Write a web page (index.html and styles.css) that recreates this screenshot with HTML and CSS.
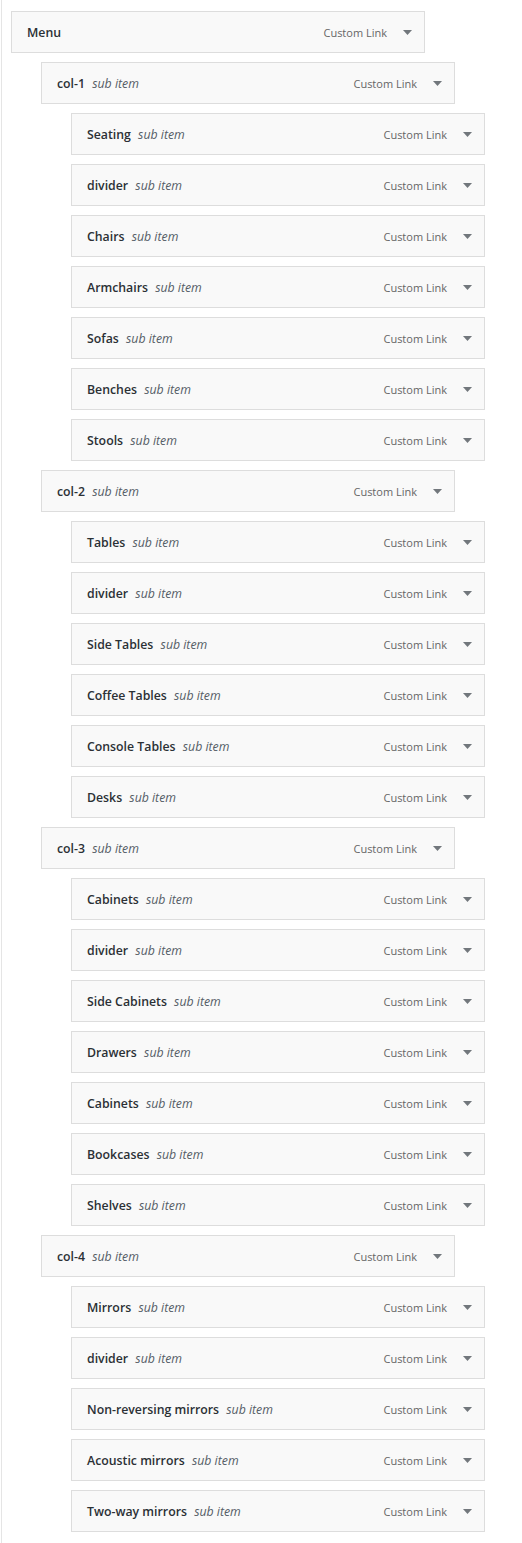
FILE: index.html
```html
<!DOCTYPE html>
<html lang="en">
<head>
<meta charset="utf-8">
<title>Menu structure</title>
<link rel="stylesheet" href="styles.css">
</head>
<body>
<div class="frame">
<ul class="menu">
  <li class="item depth-0"><div class="handle"><span class="title"><span class="label">Menu</span></span><span class="controls"><span class="type">Custom Link</span><svg class="arrow" width="9" height="5" viewBox="0 0 9 5"><path d="M0 0h9L4.5 5z"/></svg></span></div></li>
  <li class="item depth-1"><div class="handle"><span class="title"><span class="label">col-1</span> <span class="sub">sub item</span></span><span class="controls"><span class="type">Custom Link</span><svg class="arrow" width="9" height="5" viewBox="0 0 9 5"><path d="M0 0h9L4.5 5z"/></svg></span></div></li>
  <li class="item depth-2"><div class="handle"><span class="title"><span class="label">Seating</span> <span class="sub">sub item</span></span><span class="controls"><span class="type">Custom Link</span><svg class="arrow" width="9" height="5" viewBox="0 0 9 5"><path d="M0 0h9L4.5 5z"/></svg></span></div></li>
  <li class="item depth-2"><div class="handle"><span class="title"><span class="label">divider</span> <span class="sub">sub item</span></span><span class="controls"><span class="type">Custom Link</span><svg class="arrow" width="9" height="5" viewBox="0 0 9 5"><path d="M0 0h9L4.5 5z"/></svg></span></div></li>
  <li class="item depth-2"><div class="handle"><span class="title"><span class="label">Chairs</span> <span class="sub">sub item</span></span><span class="controls"><span class="type">Custom Link</span><svg class="arrow" width="9" height="5" viewBox="0 0 9 5"><path d="M0 0h9L4.5 5z"/></svg></span></div></li>
  <li class="item depth-2"><div class="handle"><span class="title"><span class="label">Armchairs</span> <span class="sub">sub item</span></span><span class="controls"><span class="type">Custom Link</span><svg class="arrow" width="9" height="5" viewBox="0 0 9 5"><path d="M0 0h9L4.5 5z"/></svg></span></div></li>
  <li class="item depth-2"><div class="handle"><span class="title"><span class="label">Sofas</span> <span class="sub">sub item</span></span><span class="controls"><span class="type">Custom Link</span><svg class="arrow" width="9" height="5" viewBox="0 0 9 5"><path d="M0 0h9L4.5 5z"/></svg></span></div></li>
  <li class="item depth-2"><div class="handle"><span class="title"><span class="label">Benches</span> <span class="sub">sub item</span></span><span class="controls"><span class="type">Custom Link</span><svg class="arrow" width="9" height="5" viewBox="0 0 9 5"><path d="M0 0h9L4.5 5z"/></svg></span></div></li>
  <li class="item depth-2"><div class="handle"><span class="title"><span class="label">Stools</span> <span class="sub">sub item</span></span><span class="controls"><span class="type">Custom Link</span><svg class="arrow" width="9" height="5" viewBox="0 0 9 5"><path d="M0 0h9L4.5 5z"/></svg></span></div></li>
  <li class="item depth-1"><div class="handle"><span class="title"><span class="label">col-2</span> <span class="sub">sub item</span></span><span class="controls"><span class="type">Custom Link</span><svg class="arrow" width="9" height="5" viewBox="0 0 9 5"><path d="M0 0h9L4.5 5z"/></svg></span></div></li>
  <li class="item depth-2"><div class="handle"><span class="title"><span class="label">Tables</span> <span class="sub">sub item</span></span><span class="controls"><span class="type">Custom Link</span><svg class="arrow" width="9" height="5" viewBox="0 0 9 5"><path d="M0 0h9L4.5 5z"/></svg></span></div></li>
  <li class="item depth-2"><div class="handle"><span class="title"><span class="label">divider</span> <span class="sub">sub item</span></span><span class="controls"><span class="type">Custom Link</span><svg class="arrow" width="9" height="5" viewBox="0 0 9 5"><path d="M0 0h9L4.5 5z"/></svg></span></div></li>
  <li class="item depth-2"><div class="handle"><span class="title"><span class="label">Side Tables</span> <span class="sub">sub item</span></span><span class="controls"><span class="type">Custom Link</span><svg class="arrow" width="9" height="5" viewBox="0 0 9 5"><path d="M0 0h9L4.5 5z"/></svg></span></div></li>
  <li class="item depth-2"><div class="handle"><span class="title"><span class="label">Coffee Tables</span> <span class="sub">sub item</span></span><span class="controls"><span class="type">Custom Link</span><svg class="arrow" width="9" height="5" viewBox="0 0 9 5"><path d="M0 0h9L4.5 5z"/></svg></span></div></li>
  <li class="item depth-2"><div class="handle"><span class="title"><span class="label">Console Tables</span> <span class="sub">sub item</span></span><span class="controls"><span class="type">Custom Link</span><svg class="arrow" width="9" height="5" viewBox="0 0 9 5"><path d="M0 0h9L4.5 5z"/></svg></span></div></li>
  <li class="item depth-2"><div class="handle"><span class="title"><span class="label">Desks</span> <span class="sub">sub item</span></span><span class="controls"><span class="type">Custom Link</span><svg class="arrow" width="9" height="5" viewBox="0 0 9 5"><path d="M0 0h9L4.5 5z"/></svg></span></div></li>
  <li class="item depth-1"><div class="handle"><span class="title"><span class="label">col-3</span> <span class="sub">sub item</span></span><span class="controls"><span class="type">Custom Link</span><svg class="arrow" width="9" height="5" viewBox="0 0 9 5"><path d="M0 0h9L4.5 5z"/></svg></span></div></li>
  <li class="item depth-2"><div class="handle"><span class="title"><span class="label">Cabinets</span> <span class="sub">sub item</span></span><span class="controls"><span class="type">Custom Link</span><svg class="arrow" width="9" height="5" viewBox="0 0 9 5"><path d="M0 0h9L4.5 5z"/></svg></span></div></li>
  <li class="item depth-2"><div class="handle"><span class="title"><span class="label">divider</span> <span class="sub">sub item</span></span><span class="controls"><span class="type">Custom Link</span><svg class="arrow" width="9" height="5" viewBox="0 0 9 5"><path d="M0 0h9L4.5 5z"/></svg></span></div></li>
  <li class="item depth-2"><div class="handle"><span class="title"><span class="label">Side Cabinets</span> <span class="sub">sub item</span></span><span class="controls"><span class="type">Custom Link</span><svg class="arrow" width="9" height="5" viewBox="0 0 9 5"><path d="M0 0h9L4.5 5z"/></svg></span></div></li>
  <li class="item depth-2"><div class="handle"><span class="title"><span class="label">Drawers</span> <span class="sub">sub item</span></span><span class="controls"><span class="type">Custom Link</span><svg class="arrow" width="9" height="5" viewBox="0 0 9 5"><path d="M0 0h9L4.5 5z"/></svg></span></div></li>
  <li class="item depth-2"><div class="handle"><span class="title"><span class="label">Cabinets</span> <span class="sub">sub item</span></span><span class="controls"><span class="type">Custom Link</span><svg class="arrow" width="9" height="5" viewBox="0 0 9 5"><path d="M0 0h9L4.5 5z"/></svg></span></div></li>
  <li class="item depth-2"><div class="handle"><span class="title"><span class="label">Bookcases</span> <span class="sub">sub item</span></span><span class="controls"><span class="type">Custom Link</span><svg class="arrow" width="9" height="5" viewBox="0 0 9 5"><path d="M0 0h9L4.5 5z"/></svg></span></div></li>
  <li class="item depth-2"><div class="handle"><span class="title"><span class="label">Shelves</span> <span class="sub">sub item</span></span><span class="controls"><span class="type">Custom Link</span><svg class="arrow" width="9" height="5" viewBox="0 0 9 5"><path d="M0 0h9L4.5 5z"/></svg></span></div></li>
  <li class="item depth-1"><div class="handle"><span class="title"><span class="label">col-4</span> <span class="sub">sub item</span></span><span class="controls"><span class="type">Custom Link</span><svg class="arrow" width="9" height="5" viewBox="0 0 9 5"><path d="M0 0h9L4.5 5z"/></svg></span></div></li>
  <li class="item depth-2"><div class="handle"><span class="title"><span class="label">Mirrors</span> <span class="sub">sub item</span></span><span class="controls"><span class="type">Custom Link</span><svg class="arrow" width="9" height="5" viewBox="0 0 9 5"><path d="M0 0h9L4.5 5z"/></svg></span></div></li>
  <li class="item depth-2"><div class="handle"><span class="title"><span class="label">divider</span> <span class="sub">sub item</span></span><span class="controls"><span class="type">Custom Link</span><svg class="arrow" width="9" height="5" viewBox="0 0 9 5"><path d="M0 0h9L4.5 5z"/></svg></span></div></li>
  <li class="item depth-2"><div class="handle"><span class="title"><span class="label">Non-reversing mirrors</span> <span class="sub">sub item</span></span><span class="controls"><span class="type">Custom Link</span><svg class="arrow" width="9" height="5" viewBox="0 0 9 5"><path d="M0 0h9L4.5 5z"/></svg></span></div></li>
  <li class="item depth-2"><div class="handle"><span class="title"><span class="label">Acoustic mirrors</span> <span class="sub">sub item</span></span><span class="controls"><span class="type">Custom Link</span><svg class="arrow" width="9" height="5" viewBox="0 0 9 5"><path d="M0 0h9L4.5 5z"/></svg></span></div></li>
  <li class="item depth-2"><div class="handle"><span class="title"><span class="label">Two-way mirrors</span> <span class="sub">sub item</span></span><span class="controls"><span class="type">Custom Link</span><svg class="arrow" width="9" height="5" viewBox="0 0 9 5"><path d="M0 0h9L4.5 5z"/></svg></span></div></li>
</ul>
</div>
</body>
</html>
```

FILE: styles.css
```css
html, body {
  margin: 0;
  padding: 0;
  background: #ffffff;
}

body {
  font-family: "Open Sans", "Noto Sans", "Liberation Sans", sans-serif;
  color: #23282d;
}

.frame {
  margin-left: 1px;
  border-left: 1px solid #e5e5e5;
  min-height: 1543px;
  box-sizing: border-box;
  padding: 11px 0 0 9px;
}

.menu {
  list-style: none;
  margin: 0;
  padding: 0;
  display: flex;
  flex-direction: column;
  gap: 9px;
}

.item {
  margin: 0;
}

.depth-1 { margin-left: 30px; }
.depth-2 { margin-left: 60px; }

.handle {
  box-sizing: border-box;
  width: 414px;
  height: 42px;
  border: 1px solid #dddddd;
  background: #f9f9f9;
  padding: 11px 12px 9px 15px;
  display: flex;
  align-items: center;
  justify-content: space-between;
  line-height: 20px;
}

.title {
  font-size: 12.3px;
  white-space: nowrap;
}

.label {
  font-weight: 600;
  color: #2b3035;
}

.sub {
  font-style: italic;
  font-weight: 400;
  color: #555d66;
  margin-left: 4px;
}

.controls {
  display: flex;
  align-items: center;
  gap: 16px;
}

.type {
  font-size: 11px;
  color: #666666;
}

.arrow {
  display: block;
  margin-top: -1px;
  fill: #72777c;
}
```
